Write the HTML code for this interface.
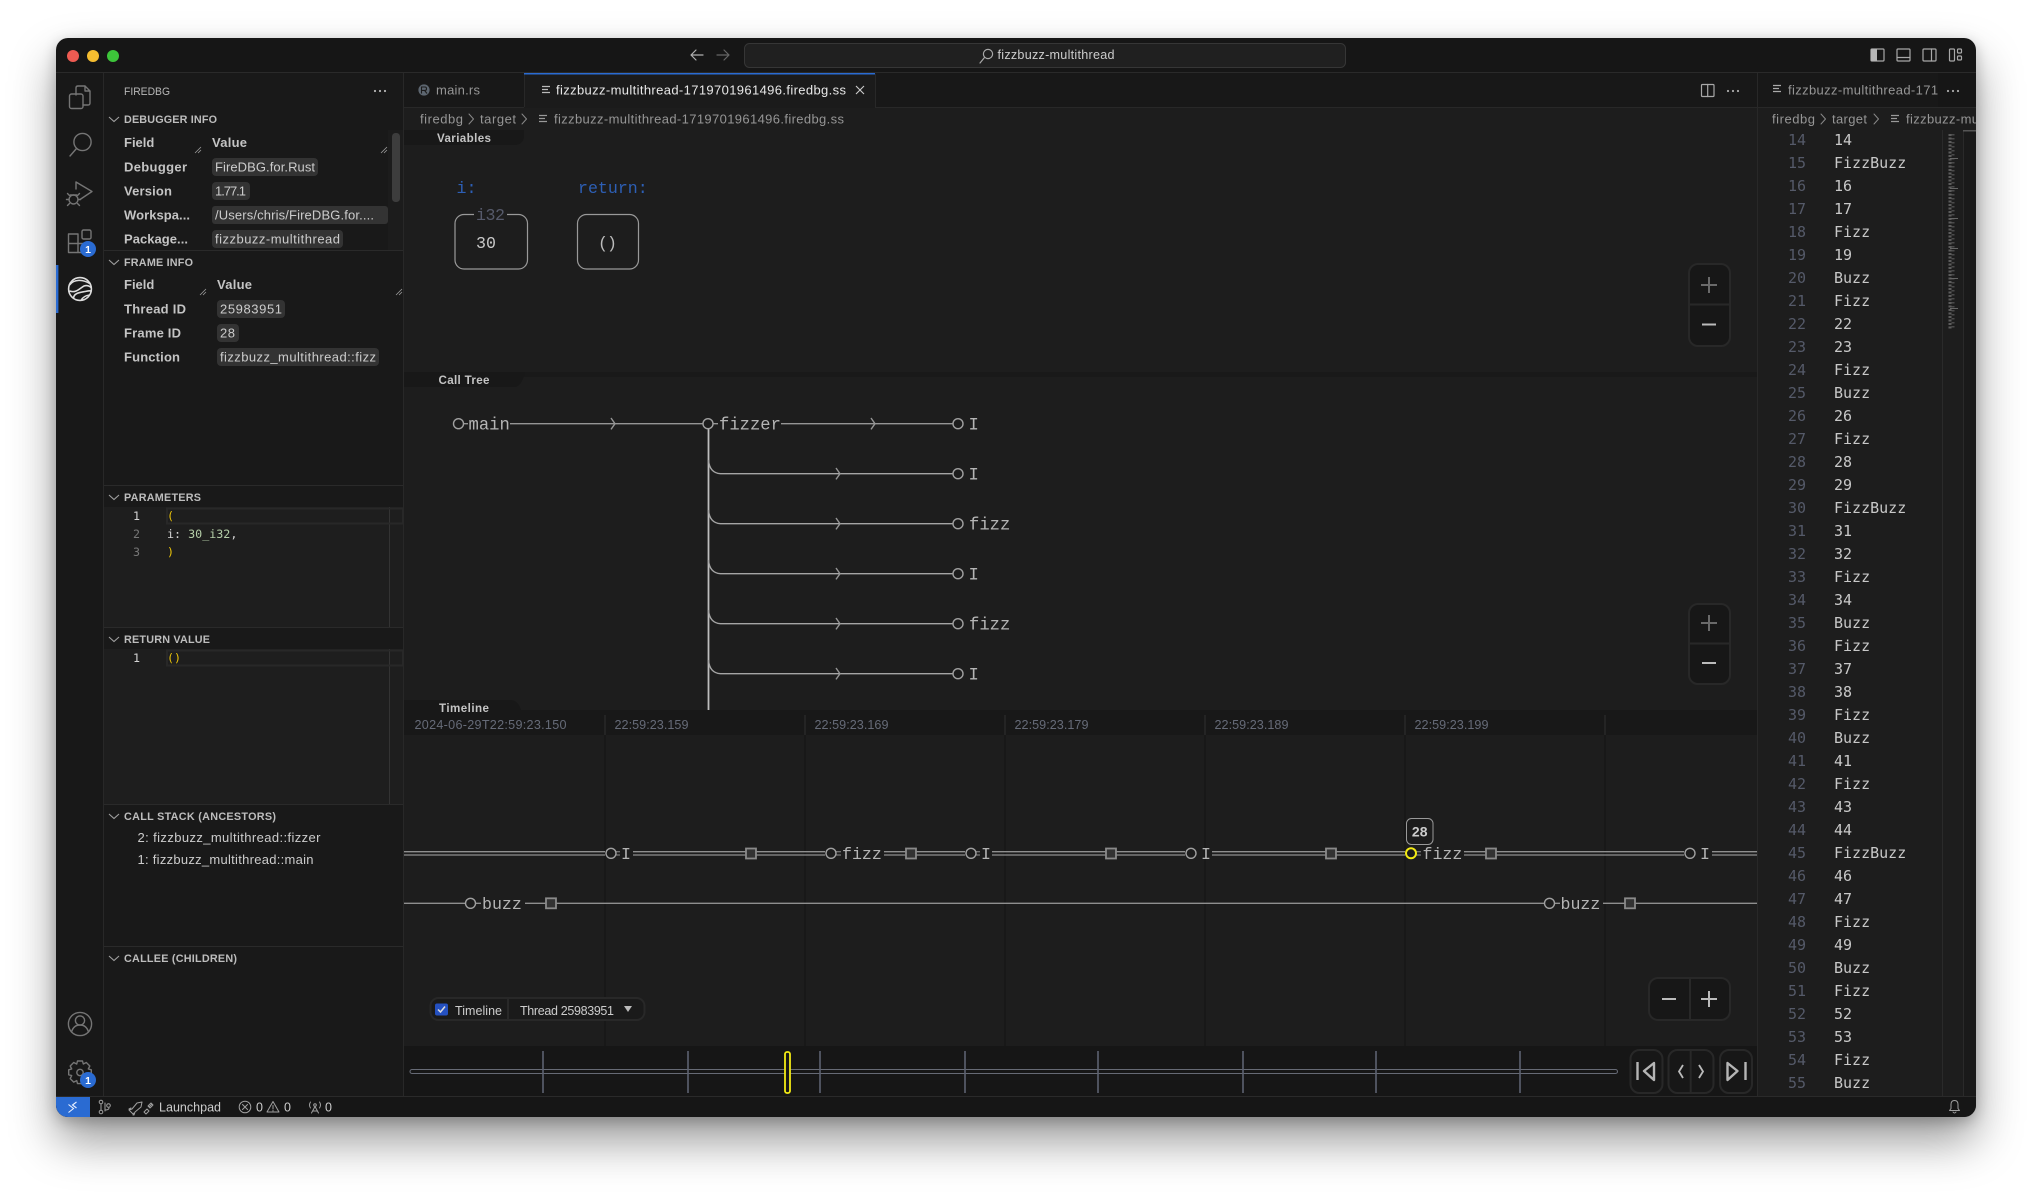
<!DOCTYPE html>
<html><head><meta charset="utf-8"><title>fizzbuzz-multithread</title>
<style>
html,body{margin:0;padding:0;width:2032px;height:1192px;background:#fff;overflow:hidden}
#win{position:absolute;left:56px;top:38px;width:1920px;height:1079px;border-radius:12px;box-shadow:0 24px 46px rgba(0,0,0,.4),0 4px 14px rgba(0,0,0,.22)}
svg{position:absolute;left:0;top:0}
text{font-family:"Liberation Sans",sans-serif;white-space:pre}
.s{font-size:13px;fill:#ccc}
.b{font-size:13px;font-weight:700;fill:#c4c4c4}
.h{font-size:10.8px;font-weight:700;fill:#bdbdbd}
.g{font-size:13px;fill:#969696}
.t{font-size:12.6px;fill:#666b78}
.m{font-family:"DejaVu Sans Mono","Liberation Mono",monospace;font-size:15px;fill:#c8c8c8}
.n{font-family:"DejaVu Sans Mono","Liberation Mono",monospace;font-size:15px;fill:#555a69;text-anchor:end}
.c{font-family:"DejaVu Sans Mono","Liberation Mono",monospace;font-size:11.7px;fill:#d4d4d4}
.l{font-family:"Liberation Mono",monospace;font-size:17.2px;fill:#b4b4b4}
.v{font-family:"Liberation Mono",monospace;font-size:16.6px}
.ic{fill:none;stroke:#757575;stroke-width:1.4;stroke-linecap:round;stroke-linejoin:round}
.ia{fill:none;stroke:#a8a8a8;stroke-width:1.2;stroke-linecap:round;stroke-linejoin:round}
.w{fill:none;stroke:#959595;stroke-width:1.4}
.nd{fill:#1c1c1c;stroke:#a0a0a0;stroke-width:1.4}
.sq{fill:#333;stroke:#8a8a8a;stroke-width:1.8}
.tk{stroke:#5d6270;stroke-width:1.6}
.gl{stroke:#181818;stroke-width:1.6}
</style></head><body>
<div id="win"></div>
<svg width="2032" height="1192" viewBox="0 0 2032 1192" xmlns="http://www.w3.org/2000/svg">
<defs>
<clipPath id="wc"><rect x="56" y="38" width="1920" height="1079" rx="12"/></clipPath>
<clipPath id="rt"><rect x="1757" y="73" width="181" height="34"/></clipPath>
<clipPath id="rb"><rect x="1757" y="107" width="219" height="23"/></clipPath>
<clipPath id="ed"><rect x="1757" y="130" width="185" height="966"/></clipPath>
</defs>
<g clip-path="url(#wc)">
<!-- base -->
<rect x="56" y="38" width="1920" height="1079" fill="#161616"/>
<rect x="56" y="73" width="48" height="1024" fill="#181818"/>
<rect x="104" y="73" width="300" height="1024" fill="#191919"/>
<rect x="404" y="73" width="1353" height="34" fill="#181818"/>
<rect x="404" y="107" width="1353" height="989" fill="#1d1d1d"/>
<rect x="1757" y="73" width="219" height="34" fill="#181818"/>
<rect x="1757" y="107" width="219" height="989" fill="#1d1d1d"/>
<rect x="1963" y="130" width="13" height="966" fill="#1a1a1a"/>
<rect x="56" y="1097" width="1920" height="20" fill="#161616"/>
<rect x="56" y="1097" width="34" height="20" fill="#2a6bd2"/>
<path d="M56 72.5H1976M56 1096.5H1976" stroke="#2a2a2a"/>
<path d="M103.5 73V1096M403.5 73V1096M1757.5 73V1096M404 107.5H1976" stroke="#282828"/>

<!-- title bar -->
<circle cx="73" cy="56" r="6" fill="#ee5b52"/><circle cx="93" cy="56" r="6" fill="#f5bd30"/><circle cx="113" cy="56" r="6" fill="#3dc53a"/>
<path class="ia" d="M703 55H691M696 50l-5 5 5 5" style="stroke:#b0b0b0"/>
<path class="ia" d="M717 55H729M724 50l5 5-5 5" style="stroke:#666"/>
<rect x="744.5" y="43.5" width="601" height="24" rx="5" fill="#202020" stroke="#363636"/>
<circle cx="988" cy="54" r="4.6" class="ia"/><path class="ia" d="M984.6 57.4L980 63"/>
<text x="997.5" y="59" class="s" style="font-size:12.6px" textLength="117">fizzbuzz-multithread</text>
<rect x="1871" y="49" width="13" height="12" rx="1" class="ia"/><rect x="1871" y="49" width="6" height="12" fill="#b5b5b5"/>
<rect x="1897" y="49" width="13" height="12" rx="1" class="ia"/><path class="ia" d="M1897 57.5H1910"/>
<rect x="1923" y="49" width="13" height="12" rx="1" class="ia"/><path class="ia" d="M1931.5 49V61"/>
<rect x="1949.5" y="49" width="5" height="12" rx="1" class="ia"/><rect x="1957.5" y="49" width="4" height="4" rx="1" class="ia"/><rect x="1957.5" y="56" width="4" height="4" rx="1" class="ia"/>

<!-- activity bar -->
<rect x="56" y="265" width="2.4" height="48" fill="#2a6bd2"/>
<path class="ic" d="M76 95V88q0-2 2-2h7l5 5v12q0 2-2 2h-5M85 86v5h5"/>
<rect x="69.5" y="94" width="13.5" height="14.5" rx="2" class="ic"/>
<circle cx="82.5" cy="142" r="8.6" class="ic"/><path class="ic" d="M76.5 148.5L70 156"/>
<path class="ic" d="M76 189v-7l16 9.5-12 8"/>
<circle cx="73.5" cy="199.5" r="4.5" class="ic"/><path class="ic" d="M69 199.5h-2.5M78 199.5h2.5M69.5 195.5l-2-2M77.5 195.5l2-2M69.5 203.5l-2 2M77.5 203.5l2 2M70.5 195h6"/>
<path class="ic" d="M68.5 234h9.5v18.5h-9.5zM68.5 243.5h19v9h-9.5"/>
<rect x="82" y="230" width="9" height="9" rx="1.5" class="ic"/>
<circle cx="88" cy="249" r="8" fill="#2a6bd2"/>
<text x="88" y="253" text-anchor="middle" style="font-size:10.5px;font-weight:700;fill:#fff">1</text>
<circle cx="80" cy="289" r="11.4" fill="none" stroke="#ddd" stroke-width="1.6"/>
<path d="M69.5 285C74 279 83 279 90.5 284M69.5 291C76 293.500 80 288 84 286 87 285 90 286 91.500 288M73.500 298.500C73.500 293 80 292.500 85 291.500 87.500 291 89.500 290.500 91 291M81 300.500C83 296.500 86 295.500 89.500 295" fill="none" stroke="#ddd" stroke-width="1.600"/>
<circle cx="80" cy="1024" r="11.6" class="ic"/><circle cx="80" cy="1020.5" r="4.6" class="ic"/><path class="ic" d="M71.5 1032c1.5-5 4.5-7 8.5-7s7 2 8.500 7"/>
<path class="ic" d="M77.500 1061h5l.8 3 3-1.500 3.500 3.500-1.500 3 3 .8v5l-3 .8 1.500 3-3.500 3.500-3-1.500-.8 3h-5l-.8-3-3 1.500-3.500-3.500 1.500-3-3-.8v-5l3-.8-1.500-3 3.500-3.500 3 1.500z"/><circle cx="80" cy="1072.500" r="3.200" class="ic"/>
<circle cx="88" cy="1080" r="8" fill="#2a6bd2"/>
<text x="88" y="1084" text-anchor="middle" style="font-size:10.5px;font-weight:700;fill:#fff">1</text>

<!-- sidebar -->
<text x="124" y="95" style="font-size:11px;fill:#b8b8b8" textLength="46" lengthAdjust="spacingAndGlyphs">FIREDBG</text>
<g fill="#b5b5b5"><circle cx="375" cy="91" r="1.100"/><circle cx="380" cy="91" r="1.100"/><circle cx="385" cy="91" r="1.100"/></g>
<path d="M109 117l5 4.500 5-4.500M109 260l5 4.500 5-4.500M109 495l5 4.500 5-4.500M109 637l5 4.500 5-4.500M109 814l5 4.500 5-4.500M109 956l5 4.500 5-4.500" fill="none" stroke="#a0a0a0" stroke-width="1.100"/>
<text x="124" y="123" class="h" textLength="93">DEBUGGER INFO</text>
<rect x="388" y="130" width="15" height="120" fill="#1c1c1c"/>
<rect x="392" y="133" width="8" height="69" rx="3.500" fill="#3d3d3d"/>
<text x="124" y="147" class="b">Field</text><text x="212" y="147" class="b" textLength="35">Value</text>
<path d="M195 153l6-6M198 153l3-3M381 153l6-6M384 153l3-3M200 295l6-6M203 295l3-3M396 295l6-6M399 295l3-3" stroke="#9a9a9a" stroke-width=".8" fill="none"/>
<text x="124" y="171.500" class="b" textLength="63">Debugger</text>
<rect x="212" y="158" width="106" height="18" rx="4" fill="#333"/><text x="215" y="171.500" class="s" textLength="100">FireDBG.for.Rust</text>
<text x="124" y="195.500" class="b" textLength="48">Version</text>
<rect x="212" y="182" width="38" height="18" rx="4" fill="#333"/><text x="215" y="195.500" class="s" textLength="31">1.77.1</text>
<text x="124" y="219.500" class="b" textLength="66">Workspa...</text>
<rect x="212" y="206" width="176" height="18" rx="3" fill="#333"/><text x="215" y="219.500" class="s" textLength="159">/Users/chris/FireDBG.for....</text>
<text x="124" y="243.500" class="b" textLength="64">Package...</text>
<rect x="212" y="230" width="131" height="18" rx="4" fill="#333"/><text x="215" y="243.500" class="s" textLength="125">fizzbuzz-multithread</text>

<path d="M104 250.500H403" stroke="#2a2a2a"/>
<text x="124" y="266" class="h" textLength="69">FRAME INFO</text>
<text x="124" y="289" class="b">Field</text><text x="217" y="289" class="b" textLength="35">Value</text>
<text x="124" y="313.500" class="b" textLength="62">Thread ID</text>
<rect x="217" y="300" width="68" height="18" rx="4" fill="#333"/><text x="220" y="313.500" class="s" textLength="62">25983951</text>
<text x="124" y="337.500" class="b" textLength="57">Frame ID</text>
<rect x="217" y="324" width="22" height="18" rx="4" fill="#333"/><text x="220" y="337.500" class="s" textLength="15">28</text>
<text x="124" y="361.500" class="b" textLength="56">Function</text>
<rect x="217" y="348" width="162" height="18" rx="4" fill="#333"/><text x="220" y="361.500" class="s" textLength="156">fizzbuzz_multithread::fizz</text>

<rect x="104" y="507" width="299" height="120" fill="#1e1e1e"/>
<rect x="104" y="649" width="299" height="155" fill="#1e1e1e"/>
<path d="M104 485.500H403M104 627.500H403M104 804.500H403M104 946.500H403" stroke="#2a2a2a"/>
<path d="M389.500 507V627M389.500 649V804" stroke="#333"/>
<text x="124" y="501" class="h" textLength="77">PARAMETERS</text>
<rect x="167" y="508.500" width="236" height="15" fill="none" stroke="#282828" stroke-width="2"/>
<text x="140" y="520" class="c" text-anchor="end">1</text>
<text x="140" y="538" class="c" text-anchor="end" style="fill:#777">2</text>
<text x="140" y="556" class="c" text-anchor="end" style="fill:#777">3</text>
<text x="167" y="520" class="c" style="fill:#e8c20a">(</text>
<text x="167" y="538" class="c">i: <tspan fill="#b5cea8">30_i32</tspan>,</text>
<text x="167" y="556" class="c" style="fill:#e8c20a">)</text>
<text x="124" y="643" class="h" textLength="86">RETURN VALUE</text>
<rect x="167" y="650.500" width="236" height="15" fill="none" stroke="#282828" stroke-width="2"/>
<text x="140" y="662" class="c" text-anchor="end">1</text>
<text x="167" y="662" class="c" style="fill:#e8c20a">()</text>
<text x="124" y="820" class="h" textLength="152">CALL STACK (ANCESTORS)</text>
<text x="137.500" y="842" class="s" textLength="183">2: fizzbuzz_multithread::fizzer</text>
<text x="137.500" y="864" class="s" textLength="176">1: fizzbuzz_multithread::main</text>
<text x="124" y="962" class="h" textLength="113">CALLEE (CHILDREN)</text>

<!-- tabs -->
<rect x="524" y="73" width="351" height="35" fill="#1b1b1b"/>
<path d="M524.500 74V107M875.500 74V107" stroke="#282828"/>
<rect x="524" y="73" width="351" height="1.500" fill="#2a6bd2"/>
<circle cx="424" cy="90" r="5.600" fill="#5d6670"/><path d="M421.500 93.500V87h3.500q1.500 0 1.500 1.700t-1.500 1.700h-3.500M424.500 90.400l2.500 3.100" stroke="#1b1b1b" fill="none" stroke-width="1.100"/>
<text x="436" y="94.500" class="g" textLength="44">main.rs</text>
<path d="M542 86.500h8M542 89.500h6M542 92.500h8" stroke="#bbb" stroke-width="1.300" fill="none"/>
<text x="556" y="94.500" class="s" style="fill:#e8e8e8" textLength="290">fizzbuzz-multithread-1719701961496.firedbg.ss</text>
<path d="M856 86l8 8M864 86l-8 8" stroke="#ccc" stroke-width="1.100"/>
<rect x="1701.500" y="84.500" width="12.500" height="12" rx="1" class="ia"/><path class="ia" d="M1707.700 84.500V96.500"/>
<g fill="#aaa"><circle cx="1728" cy="91" r="1.100"/><circle cx="1733" cy="91" r="1.100"/><circle cx="1738" cy="91" r="1.100"/></g>
<!-- breadcrumb -->
<text x="420" y="123.500" class="g" textLength="43">firedbg</text>
<path d="M469 114l4.500 5-4.500 5M522 114l4.500 5-4.500 5" class="ia" style="stroke:#888;stroke-width:1"/>
<text x="480" y="123.500" class="g" textLength="36">target</text>
<path d="M539 115.500h8M539 118.500h6M539 121.500h8" stroke="#999" stroke-width="1.300" fill="none"/>
<text x="554" y="123.500" class="g" textLength="290">fizzbuzz-multithread-1719701961496.firedbg.ss</text>

<!-- right tab -->
<path d="M1773 85.500h8M1773 88.500h6M1773 91.500h8" stroke="#aaa" stroke-width="1.300" fill="none"/>
<g clip-path="url(#rt)"><text x="1788" y="94.500" class="g" textLength="290">fizzbuzz-multithread-1719701961496.firedbg.ss</text></g>
<rect x="1938" y="73" width="38" height="34" fill="#161616"/>
<g fill="#aaa"><circle cx="1948" cy="91" r="1.100"/><circle cx="1953" cy="91" r="1.100"/><circle cx="1958" cy="91" r="1.100"/></g>
<text x="1772" y="123.500" class="g" textLength="43">firedbg</text>
<path d="M1821 114l4.500 5-4.500 5M1874 114l4.500 5-4.500 5" class="ia" style="stroke:#888;stroke-width:1"/>
<text x="1832" y="123.500" class="g" textLength="35">target</text>
<path d="M1891 115.500h8M1891 118.500h6M1891 121.500h8" stroke="#999" stroke-width="1.300" fill="none"/>
<g clip-path="url(#rb)"><text x="1906" y="123.500" class="g" textLength="290">fizzbuzz-multithread-1719701961496.firedbg.ss</text></g>

<!-- editor -->
<g clip-path="url(#ed)">
<text x="1806" y="145" class="n">14</text><text x="1834" y="145" class="m">14</text>
<text x="1806" y="168" class="n">15</text><text x="1834" y="168" class="m">FizzBuzz</text>
<text x="1806" y="191" class="n">16</text><text x="1834" y="191" class="m">16</text>
<text x="1806" y="214" class="n">17</text><text x="1834" y="214" class="m">17</text>
<text x="1806" y="237" class="n">18</text><text x="1834" y="237" class="m">Fizz</text>
<text x="1806" y="260" class="n">19</text><text x="1834" y="260" class="m">19</text>
<text x="1806" y="283" class="n">20</text><text x="1834" y="283" class="m">Buzz</text>
<text x="1806" y="306" class="n">21</text><text x="1834" y="306" class="m">Fizz</text>
<text x="1806" y="329" class="n">22</text><text x="1834" y="329" class="m">22</text>
<text x="1806" y="352" class="n">23</text><text x="1834" y="352" class="m">23</text>
<text x="1806" y="375" class="n">24</text><text x="1834" y="375" class="m">Fizz</text>
<text x="1806" y="398" class="n">25</text><text x="1834" y="398" class="m">Buzz</text>
<text x="1806" y="421" class="n">26</text><text x="1834" y="421" class="m">26</text>
<text x="1806" y="444" class="n">27</text><text x="1834" y="444" class="m">Fizz</text>
<text x="1806" y="467" class="n">28</text><text x="1834" y="467" class="m">28</text>
<text x="1806" y="490" class="n">29</text><text x="1834" y="490" class="m">29</text>
<text x="1806" y="513" class="n">30</text><text x="1834" y="513" class="m">FizzBuzz</text>
<text x="1806" y="536" class="n">31</text><text x="1834" y="536" class="m">31</text>
<text x="1806" y="559" class="n">32</text><text x="1834" y="559" class="m">32</text>
<text x="1806" y="582" class="n">33</text><text x="1834" y="582" class="m">Fizz</text>
<text x="1806" y="605" class="n">34</text><text x="1834" y="605" class="m">34</text>
<text x="1806" y="628" class="n">35</text><text x="1834" y="628" class="m">Buzz</text>
<text x="1806" y="651" class="n">36</text><text x="1834" y="651" class="m">Fizz</text>
<text x="1806" y="674" class="n">37</text><text x="1834" y="674" class="m">37</text>
<text x="1806" y="697" class="n">38</text><text x="1834" y="697" class="m">38</text>
<text x="1806" y="720" class="n">39</text><text x="1834" y="720" class="m">Fizz</text>
<text x="1806" y="743" class="n">40</text><text x="1834" y="743" class="m">Buzz</text>
<text x="1806" y="766" class="n">41</text><text x="1834" y="766" class="m">41</text>
<text x="1806" y="789" class="n">42</text><text x="1834" y="789" class="m">Fizz</text>
<text x="1806" y="812" class="n">43</text><text x="1834" y="812" class="m">43</text>
<text x="1806" y="835" class="n">44</text><text x="1834" y="835" class="m">44</text>
<text x="1806" y="858" class="n">45</text><text x="1834" y="858" class="m">FizzBuzz</text>
<text x="1806" y="881" class="n">46</text><text x="1834" y="881" class="m">46</text>
<text x="1806" y="904" class="n">47</text><text x="1834" y="904" class="m">47</text>
<text x="1806" y="927" class="n">48</text><text x="1834" y="927" class="m">Fizz</text>
<text x="1806" y="950" class="n">49</text><text x="1834" y="950" class="m">49</text>
<text x="1806" y="973" class="n">50</text><text x="1834" y="973" class="m">Buzz</text>
<text x="1806" y="996" class="n">51</text><text x="1834" y="996" class="m">Fizz</text>
<text x="1806" y="1019" class="n">52</text><text x="1834" y="1019" class="m">52</text>
<text x="1806" y="1042" class="n">53</text><text x="1834" y="1042" class="m">53</text>
<text x="1806" y="1065" class="n">54</text><text x="1834" y="1065" class="m">Fizz</text>
<text x="1806" y="1088" class="n">55</text><text x="1834" y="1088" class="m">Buzz</text>
</g>
<path d="M1942.500 130V1096M1963.500 130V1096" stroke="#2a2a2a"/>
<rect x="1963" y="130" width="13" height="1.500" fill="#555"/>
<path d="M1950 134v196" stroke="#5c5c5c" stroke-width="3" stroke-dasharray="2 1.500"/>
<path d="M1953 134v196" stroke="#4a4a4a" stroke-width="3" stroke-dasharray="1.500 2.500"/>
<path d="M1950 158.500h8M1950 188.500h8M1950 218.500h8M1950 248.500h8M1950 278.500h8M1950 308.500h8" stroke="#666"/>

<!-- main panels -->
<path d="M404 130H524v5q0 10-10 10H404z" fill="#181818"/>
<text x="437" y="142" style="font-size:11.600px;font-weight:700;fill:#c4c4c4" textLength="54">Variables</text>
<text x="456.500" y="193" class="v" style="fill:#2d5fb5">i:</text>
<text x="578" y="193" class="v" style="fill:#2d5fb5">return:</text>
<rect x="455" y="214.500" width="72.500" height="54.500" rx="9" fill="none" stroke="#999" stroke-width="1.200"/>
<rect x="474" y="208" width="33" height="12" fill="#1d1d1d"/>
<text x="476" y="220" class="v" style="fill:#565a6b" textLength="29">i32</text>
<text x="476" y="248" class="v" style="fill:#c8c8c8" textLength="20">30</text>
<rect x="577.500" y="214.500" width="61" height="54.500" rx="9" fill="none" stroke="#999" stroke-width="1.200"/>
<text x="598" y="248" class="v" style="fill:#bbb" textLength="19">()</text>

<!-- zoom controls var -->
<rect x="1689" y="264" width="41" height="82" rx="9" fill="#171717" stroke="#282828" stroke-width="2"/>
<path d="M1689 304.500H1730" stroke="#282828" stroke-width="2"/>
<path d="M1709 277v16M1701 285h16" stroke="#6a6a6a" stroke-width="2"/>
<path d="M1702 324.500h14" stroke="#bbb" stroke-width="2"/>
<!-- call tree -->
<rect x="404" y="372" width="1353" height="5" fill="#191919"/>
<path d="M404 372H525q-3 14-10 15H404z" fill="#181818"/>
<text x="438.500" y="384" style="font-size:11.600px;font-weight:700;fill:#c4c4c4" textLength="51">Call Tree</text>

<path class="w" d="M463.500 423.700H468M510 423.700H703M713 423.700H718M781 423.700H953"/>
<path d="M708.500 429V710" stroke="#bdbdbd" stroke-width="1.800"/>
<path class="w" d="M708.500 460q1 13 12 13.700H953M708.500 510q1 13 12 13.700H953M708.500 560q1 13 12 13.700H953M708.500 610q1 13 12 13.700H953M708.500 660q1 13 12 13.700H953" style="stroke:#a5a5a5"/>
<path class="w" d="M611 418l4 5.700-4 5.700M871 418l4 5.700-4 5.700M836 468l4 5.700-4 5.700M836 518l4 5.700-4 5.700M836 568l4 5.700-4 5.700M836 618l4 5.700-4 5.700M836 668l4 5.700-4 5.700"/>
<circle class="nd" cx="458.500" cy="423.700" r="5"/><circle class="nd" cx="708" cy="423.700" r="5"/>
<circle class="nd" cx="958" cy="423.700" r="5"/><circle class="nd" cx="958" cy="473.700" r="5"/><circle class="nd" cx="958" cy="523.700" r="5"/><circle class="nd" cx="958" cy="573.700" r="5"/><circle class="nd" cx="958" cy="623.700" r="5"/><circle class="nd" cx="958" cy="673.700" r="5"/>
<text x="468.500" y="429.500" class="l">main</text><text x="719" y="429.500" class="l">fizzer</text>
<text x="968.500" y="429.500" class="l">I</text><text x="968.500" y="479.500" class="l">I</text><text x="969" y="529.500" class="l">fizz</text><text x="968.500" y="579.500" class="l">I</text><text x="969" y="629.500" class="l">fizz</text><text x="968.500" y="679.500" class="l">I</text>
<rect x="1689" y="604" width="41" height="80" rx="9" fill="#171717" stroke="#282828" stroke-width="2"/>
<path d="M1689 643.500H1730" stroke="#282828" stroke-width="2"/>
<path d="M1709 615v16M1701 623h16" stroke="#6a6a6a" stroke-width="2"/>
<path d="M1702 663h14" stroke="#bbb" stroke-width="2"/>

<!-- timeline -->
<rect x="404" y="710" width="1353" height="25" fill="#181818"/>
<path d="M404 710V700H510q8 0 11 10z" fill="#181818"/>
<text x="439" y="712" style="font-size:11.600px;font-weight:700;fill:#c4c4c4" textLength="50">Timeline</text>
<rect x="404" y="1046" width="1353" height="50" fill="#161616"/>
<path class="gl" d="M605 735V1046M805 735V1046M1005 735V1046M1205 735V1046M1405 735V1046M1605 735V1046"/>
<path d="M605 715V735M805 715V735M1005 715V735M1205 715V735M1405 715V735M1605 715V735" stroke="#272727" stroke-width="1.600"/>
<text x="414.500" y="729" class="t" textLength="152">2024-06-29T22:59:23.150</text>
<text x="614.500" y="729" class="t" textLength="74">22:59:23.159</text>
<text x="814.500" y="729" class="t" textLength="74">22:59:23.169</text>
<text x="1014.500" y="729" class="t" textLength="74">22:59:23.179</text>
<text x="1214.500" y="729" class="t" textLength="74">22:59:23.189</text>
<text x="1414.500" y="729" class="t" textLength="74">22:59:23.199</text>

<path d="M404 851.700H605M633 851.700H825M884 851.700H965M992 851.700H1185M1212 851.700H1405M1464 851.700H1684M1712 851.700H1757M404 855H605M633 855H825M884 855H965M992 855H1185M1212 855H1405M1464 855H1684M1712 855H1757" stroke="#8f8f8f" stroke-width="1.300"/>
<path d="M615.500 851.700H620M615.500 855H620M836 851.700H841M836 855H841M975.500 851.700H980M975.500 855H980M1416 851.700H1421M1416 855H1421" stroke="#8f8f8f" stroke-width="1"/>
<path d="M404 903.300H465M475.500 903.300H481M525 903.300H1544M1554.500 903.300H1560M1603 903.300H1757" stroke="#8f8f8f" stroke-width="1.400"/>
<g>
<rect class="sq" x="746" y="848.500" width="10" height="10"/><rect class="sq" x="906" y="848.500" width="10" height="10"/><rect class="sq" x="1106" y="848.500" width="10" height="10"/><rect class="sq" x="1326" y="848.500" width="10" height="10"/><rect class="sq" x="1486" y="848.500" width="10" height="10"/>
<rect class="sq" x="546" y="898.300" width="10" height="10"/><rect class="sq" x="1625" y="898.300" width="10" height="10"/>
</g>
<circle class="nd" cx="611" cy="853.300" r="5"/><circle class="nd" cx="831" cy="853.300" r="5"/><circle class="nd" cx="971" cy="853.300" r="5"/><circle class="nd" cx="1191" cy="853.300" r="5"/><circle class="nd" cx="1690" cy="853.300" r="5"/>
<circle cx="1411" cy="853.300" r="5" fill="#1c1c1c" stroke="#f2ea14" stroke-width="2"/>
<circle class="nd" cx="470.500" cy="903.300" r="5"/><circle class="nd" cx="1549.500" cy="903.300" r="5"/>
<text x="621" y="859" class="l" style="font-size:16.600px">I</text>
<text x="842" y="859" class="l" style="font-size:16.600px">fizz</text>
<text x="981" y="859" class="l" style="font-size:16.600px">I</text>
<text x="1201" y="859" class="l" style="font-size:16.600px">I</text>
<text x="1422.500" y="859" class="l" style="font-size:16.600px">fizz</text>
<text x="1700" y="859" class="l" style="font-size:16.600px">I</text>
<text x="482" y="909" class="l" style="font-size:16.600px">buzz</text>
<text x="1560.500" y="909" class="l" style="font-size:16.600px">buzz</text>
<rect x="1406.500" y="818.500" width="26.500" height="26" rx="5" fill="#1c1c1c" stroke="#999"/>
<text x="1419.700" y="836.500" text-anchor="middle" style="font-size:14px;font-weight:700;fill:#ccc">28</text>

<!-- timeline selector -->
<rect x="430.500" y="998" width="214" height="22" rx="8" fill="#1a1a1a" stroke="#282828" stroke-width="2"/>
<path d="M508 998V1020" stroke="#282828" stroke-width="2"/>
<rect x="435" y="1003.500" width="13" height="12" rx="2" fill="#2450c0"/>
<path d="M438 1009.500l2.500 2.500 4.500-5.500" fill="none" stroke="#ddd" stroke-width="1.500"/>
<text x="455" y="1015" class="s" style="font-size:12.500px" textLength="47">Timeline</text>
<text x="520" y="1015" class="s" style="font-size:12.500px" textLength="94">Thread 25983951</text>
<path d="M624 1006h8l-4 6z" fill="#bbb"/>
<!-- zoom controls timeline -->
<rect x="1649" y="978" width="81" height="42" rx="9" fill="#171717" stroke="#282828" stroke-width="2"/>
<path d="M1690 978V1020" stroke="#282828" stroke-width="2"/>
<path d="M1662 999h14" stroke="#bbb" stroke-width="2"/>
<path d="M1709 991v16M1701 999h16" stroke="#bbb" stroke-width="2"/>

<!-- scrubber -->
<rect x="410" y="1069.500" width="1207.500" height="4" rx="2" fill="none" stroke="#666a75" stroke-width="1.100"/>
<path class="tk" d="M543 1051V1093M688 1051V1093M820 1051V1093M965 1051V1093M1098 1051V1093M1243 1051V1093M1376 1051V1093M1520 1051V1093"/>
<rect x="785" y="1052" width="5" height="41" rx="2" fill="#161616" stroke="#f2ea14" stroke-width="1.800"/>
<rect x="1630.500" y="1050" width="32" height="43" rx="9" fill="#171717" stroke="#282828" stroke-width="2"/>
<rect x="1668.500" y="1050" width="45" height="43" rx="9" fill="#171717" stroke="#282828" stroke-width="2"/>
<path d="M1690.700 1050V1093" stroke="#282828" stroke-width="2"/>
<rect x="1720" y="1050" width="32" height="43" rx="9" fill="#171717" stroke="#282828" stroke-width="2"/>
<path d="M1637.500 1062v18M1654 1063l-10 8 10 9z" fill="none" stroke="#b5b5b5" stroke-width="2.400" stroke-linejoin="round"/>
<path d="M1683 1065l-4 6.500 4 6.500M1699 1065l4 6.500-4 6.500" fill="none" stroke="#bbb" stroke-width="1.800"/>
<path d="M1745.500 1062v18M1727.500 1063l10 8-10 9z" fill="none" stroke="#b5b5b5" stroke-width="2.400" stroke-linejoin="round"/>

<!-- status bar -->
<path d="M68.500 1104.500l5 4-5 4M76.500 1102l-4 3 4 3" fill="none" stroke="#e8f0ff" stroke-width="1.100"/>
<g class="ia" style="stroke:#a0a0a0;stroke-width:1">
<circle cx="101" cy="1102" r="1.800" fill="none"/><circle cx="101" cy="1112" r="1.800" fill="none"/><path fill="none" d="M101 1104V1110M109 1108q0 2-4 2M105 1103v8"/><circle cx="108.500" cy="1105.500" r="1.800" fill="none"/>
<path fill="none" d="M131 1112l-2-2 3-1 5-6 5-1-1 5-6 5-1 3zM131 1108l-2 1M134 1113l-1 2"/>
<path fill="none" d="M144 1112l3-3M149 1107l3-3M146 1114l-2-2 3-3 2 2zM150 1108l-2-2 3-3 2 2z"/>
<circle cx="245" cy="1107" r="5.800" fill="none"/><path fill="none" d="M242.500 1104.500l5 5M247.500 1104.500l-5 5"/>
<path fill="none" d="M273 1101.500l6 10.500h-12zM273 1105.500v3.500M273 1110.500v.5"/>
<circle cx="315" cy="1105" r="1.300" fill="none"/><path fill="none" d="M315 1106.500L311.500 1113M315 1106.500L318.500 1113M312.500 1111h5M310.500 1108q-2-3 0-6M319.500 1108q2-3 0-6"/>
<path fill="none" d="M1954.500 1100.500q3.500 0 3.500 4v4l1.500 2h-10l1.500-2v-4q0-4 3.500-4zM1953 1112q1.500 2 3 0"/>
</g>
<text x="159" y="1111.500" class="s" style="font-size:12.500px" textLength="62">Launchpad</text>
<text x="256" y="1111.500" class="s" style="font-size:12.500px">0</text>
<text x="284" y="1111.500" class="s" style="font-size:12.500px">0</text>
<text x="325" y="1111.500" class="s" style="font-size:12.500px">0</text>
</g>
</svg>
</body></html>
